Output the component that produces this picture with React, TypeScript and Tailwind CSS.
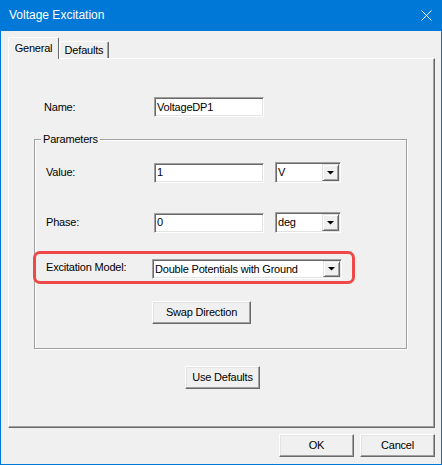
import { ReactNode } from "react";

const sunken =
  "border border-t-[#a0a0a0] border-l-[#a0a0a0] border-r-white border-b-white shadow-[inset_1px_1px_0_#696969,inset_-1px_-1px_0_#e3e3e3]";
const raised =
  "border border-t-white border-l-white border-r-[#696969] border-b-[#696969] shadow-[inset_-1px_-1px_0_#a0a0a0,inset_1px_1px_0_#e3e3e3]";

function TextBox({ value, className }: { value: string; className: string }) {
  return (
    <div className={`${className} h-[20px] flex items-center pl-[2px] bg-white ${sunken}`}>
      {value}
    </div>
  );
}

function Combo({ value, className }: { value: string; className: string }) {
  return (
    <div className={`${className} flex bg-white ${sunken}`}>
      <span className="flex-1 flex items-center pl-[2px] whitespace-nowrap overflow-hidden">{value}</span>
      <span className="w-[17px] my-px mr-px flex items-center justify-center bg-[#f0f0f0] border border-t-[#e3e3e3] border-l-[#e3e3e3] border-r-[#696969] border-b-[#696969] shadow-[inset_1px_1px_0_#fff,inset_-1px_-1px_0_#a0a0a0]">
        <svg width="7" height="4" viewBox="0 0 7 4">
          <path d="M0 0H7L3.5 3.6Z" fill="#000" />
        </svg>
      </span>
    </div>
  );
}

function Button({ children, className }: { children: ReactNode; className: string }) {
  return (
    <div className={`${className} h-[23px] flex items-center justify-center bg-[#f0f0f0] ${raised}`}>
      {children}
    </div>
  );
}

export default function App() {
  return (
    <div className="w-[442px] h-[465px] flex flex-col bg-[#f0f0f0] border-x border-b border-[#0078d7] font-['Liberation_Sans',Arial,sans-serif] text-[11px] leading-[13px] tracking-[-0.2px] text-black">
      {/* title bar */}
      <div className="h-[31px] shrink-0 bg-[#0078d7] flex items-center justify-between pl-[8px] pr-[9px]">
        <span className="text-white text-[12px] tracking-normal">Voltage Excitation</span>
        <svg width="11" height="11" viewBox="0 0 11 11">
          <path d="M0.5 0.5L10.5 10.5M10.5 0.5L0.5 10.5" stroke="#fff" strokeWidth="1" />
        </svg>
      </div>

      <div className="flex-1 flex flex-col pt-[6px] pl-[7px] pr-[6px]">
        {/* tabs */}
        <div className="h-[21px] flex items-end">
          <div className="relative z-10 -mb-px h-[22px] w-[51px] bg-[#f0f0f0] border-t border-l border-r border-t-white border-l-white border-r-[#696969] rounded-t-[2px] flex items-center justify-center pb-px">
            General
          </div>
          <div className="h-[17px] w-[50px] border-t border-l border-r border-t-white border-l-white border-r-[#696969] shadow-[inset_-1px_0_0_#a0a0a0] rounded-t-[2px] flex items-center justify-center">
            Defaults
          </div>
        </div>

        {/* tab page */}
        <div className="h-[370px] pl-[25px] border border-t-white border-l-white border-r-[#696969] border-b-[#696969] shadow-[inset_-1px_-1px_0_#a0a0a0]">
          <div className="mt-[38px] ml-[10px] flex items-center">
            <span className="w-[110px]">Name:</span>
            <TextBox className="w-[110px]" value="VoltageDP1" />
          </div>

          <div className="mt-[22px] w-[373px] pb-[24px] border border-[#a0a0a0] shadow-[inset_1px_1px_0_#fff,1px_1px_0_#fff]">
            <div className="-mt-[7px] ml-[6px] w-fit px-[2px] bg-[#f0f0f0]">Parameters</div>

            <div className="mt-[16px] ml-[11px] flex items-center">
              <span className="w-[108px]">Value:</span>
              <TextBox className="w-[110px]" value="1" />
              <Combo className="ml-[11px] w-[66px] h-[21px]" value="V" />
            </div>

            <div className="mt-[29px] ml-[11px] flex items-center">
              <span className="w-[108px]">Phase:</span>
              <TextBox className="w-[110px]" value="0" />
              <Combo className="ml-[11px] w-[66px] h-[21px]" value="deg" />
            </div>

            <div className="mt-[18px] -ml-[2px] w-[322px] h-[33px] pl-[10px] flex items-center border-[3px] border-[#ef4848] rounded-[7px]">
              <span className="w-[106px]">Excitation Model:</span>
              <Combo className="mt-[3px] w-[190px] h-[20px]" value="Double Potentials with Ground" />
            </div>

            <Button className="mt-[17px] ml-[117px] w-[99px]">Swap Direction</Button>
          </div>

          <Button className="mt-[17px] ml-[151px] w-[75px]">Use Defaults</Button>
        </div>

        <div className="mt-[6px] flex justify-end gap-[6px]">
          <Button className="w-[75px]">OK</Button>
          <Button className="w-[75px]">Cancel</Button>
        </div>
      </div>
    </div>
  );
}
